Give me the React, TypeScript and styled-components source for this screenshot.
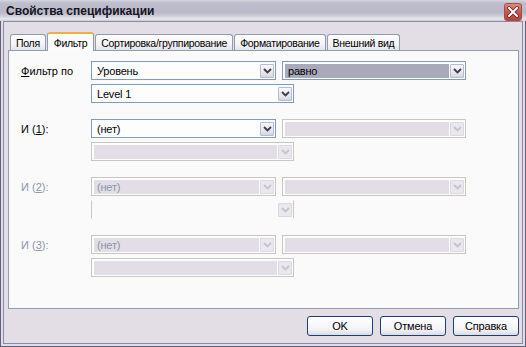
import React from "react";
import styled, { createGlobalStyle } from "styled-components";

const GlobalStyle = createGlobalStyle`
  html, body {
    margin: 0;
    padding: 0;
    background: #e3dee5;
  }
  * {
    box-sizing: border-box;
  }
`;

type ComboProps = {
  width: number;
  text?: string;
  selected?: boolean;
  disabled?: boolean;
  ghost?: boolean;
};

const Chevron = ({ disabled }: { disabled?: boolean }) => (
  <svg width="9" height="6" viewBox="0 0 9 6">
    <path
      d="M1 1 L4.5 4.5 L8 1"
      fill="none"
      stroke={disabled ? "#c6c3cb" : "#3c3c4a"}
      strokeWidth="1.8"
    />
  </svg>
);

const Combo = ({ width, text, selected, disabled, ghost }: ComboProps) => (
  <ComboBox $w={width} $disabled={disabled} $ghost={ghost}>
    <ComboText $selected={selected} $disabled={disabled} $ghost={ghost}>
      {text}
    </ComboText>
    <DropButton $disabled={disabled}>
      <Chevron disabled={disabled} />
    </DropButton>
  </ComboBox>
);

export default function App() {
  return (
    <>
      <GlobalStyle />
      <Window>
        <TitleBar>
          <Title>Свойства спецификации</Title>
          <CloseButton>
            <svg width="12" height="12" viewBox="0 0 12 12">
              <path
                d="M2 2 L10 10 M10 2 L2 10"
                stroke="#5a2020"
                strokeWidth="3.4"
                strokeLinecap="square"
              />
              <path
                d="M2 2 L10 10 M10 2 L2 10"
                stroke="#ffffff"
                strokeWidth="2"
                strokeLinecap="square"
              />
            </svg>
          </CloseButton>
        </TitleBar>
        <Frame>
          <Inner>
            <TabRow>
              <Tab>Поля</Tab>
              <Tab $active>Фильтр</Tab>
              <Tab>Сортировка/группирование</Tab>
              <Tab>Форматирование</Tab>
              <Tab>Внешний вид</Tab>
            </TabRow>
            <Panel>
              <Group>
                <Row>
                  <Label>
                    <u>Ф</u>ильтр по
                  </Label>
                  <Combo width={185} text="Уровень" />
                  <Combo width={184} text="равно" selected />
                </Row>
                <Row>
                  <Label />
                  <Combo width={203} text="Level 1" />
                </Row>
              </Group>
              <Group>
                <Row>
                  <Label>
                    И (<u>1</u>):
                  </Label>
                  <Combo width={185} text="(нет)" />
                  <Combo width={184} disabled />
                </Row>
                <Row>
                  <Label />
                  <Combo width={203} disabled />
                </Row>
              </Group>
              <Group>
                <Row>
                  <Label $disabled>
                    И (<u>2</u>):
                  </Label>
                  <Combo width={185} text="(нет)" disabled />
                  <Combo width={184} disabled />
                </Row>
                <Row>
                  <Label />
                  <Combo width={203} disabled ghost />
                </Row>
              </Group>
              <Group>
                <Row>
                  <Label $disabled>
                    И (<u>3</u>):
                  </Label>
                  <Combo width={185} text="(нет)" disabled />
                  <Combo width={184} disabled />
                </Row>
                <Row>
                  <Label />
                  <Combo width={203} disabled />
                </Row>
              </Group>
            </Panel>
            <ButtonRow>
              <Button>OK</Button>
              <Button>Отмена</Button>
              <Button>Справка</Button>
            </ButtonRow>
          </Inner>
        </Frame>
      </Window>
    </>
  );
}

const Window = styled.div`
  width: 526px;
  height: 347px;
  display: flex;
  flex-direction: column;
  background: #e3dee5;
  font-family: "Liberation Sans", Arial, sans-serif;
  font-size: 11px;
  color: #000;
`;

const TitleBar = styled.div`
  height: 21px;
  flex: none;
  display: flex;
  align-items: center;
  padding: 0 4px 0 6px;
  background: linear-gradient(
    #d6d6de 0,
    #bdbdcc 15%,
    #b9b9c9 60%,
    #d3d3dc 80%,
    #e9e9ef 90%,
    #c9c9d3 100%
  );
`;

const Title = styled.div`
  flex: 1;
  font-size: 12px;
  font-weight: bold;
  color: #14141e;
  padding-top: 1px;
`;

const CloseButton = styled.div`
  width: 18px;
  height: 18px;
  margin-top: 3px;
  border-radius: 3px;
  border: 1px solid #a84a48;
  background: linear-gradient(#e08a80, #cc5a50 45%, #b8443c);
  display: flex;
  align-items: center;
  justify-content: center;
`;

const Frame = styled.div`
  flex: 1;
  display: flex;
  border: 1px solid #5e5e7a;
  border-top: none;
  padding: 0 2px 2px;
`;

const Inner = styled.div`
  flex: 1;
  display: flex;
  flex-direction: column;
  border: 1px solid #8a8aa6;
  padding: 10px 3px 7px 4px;
`;

const TabRow = styled.div`
  height: 18px;
  flex: none;
  display: flex;
  align-items: flex-end;
  padding-left: 2px;
  position: relative;
  z-index: 1;
`;

const Tab = styled.div<{ $active?: boolean }>`
  height: ${(p) => (p.$active ? 19 : 16)}px;
  margin-bottom: ${(p) => (p.$active ? -1 : 0)}px;
  margin-right: 1px;
  padding: ${(p) => (p.$active ? "1px 6px 0" : "1px 5px 0")};
  display: flex;
  align-items: center;
  border: 1px solid #919baa;
  border-bottom: none;
  border-radius: 3px 3px 0 0;
  white-space: nowrap;
  font-size: 10.5px;
  letter-spacing: -0.3px;
  background: ${(p) =>
    p.$active
      ? "#fbfbfb"
      : "linear-gradient(#fefefe, #f4f3f6 60%, #e6e4ea)"};
  border-top: ${(p) => (p.$active ? "2px solid #f0b040" : "1px solid #919baa")};
`;

const Panel = styled.div`
  height: 259px;
  flex: none;
  border: 1px solid #8ba0b5;
  background: #fafafa;
  padding: 10px 0 0 12px;
  display: flex;
  flex-direction: column;
  gap: 16px;
`;

const Group = styled.div`
  display: flex;
  flex-direction: column;
  gap: 4px;
`;

const Row = styled.div`
  display: flex;
  align-items: center;
  gap: 6px;
`;

const Label = styled.div<{ $disabled?: boolean }>`
  width: 64px;
  flex: none;
  color: ${(p) => (p.$disabled ? "#8898aa" : "#000")};
`;

const ComboBox = styled.div<{ $w: number; $disabled?: boolean; $ghost?: boolean }>`
  width: ${(p) => p.$w}px;
  height: 19px;
  flex: none;
  display: flex;
  padding: 2px 1px 1px 2px;
  border: 1px solid ${(p) => (p.$disabled ? "#c8c6c0" : "#7f9db9")};
  border-top-color: ${(p) => (p.$ghost ? "transparent" : undefined)};
  border-bottom-color: ${(p) => (p.$ghost ? "transparent" : undefined)};
  background: ${(p) => (p.$ghost ? "transparent" : "#fdfdfd")};
`;

const ComboText = styled.div<{
  $selected?: boolean;
  $disabled?: boolean;
  $ghost?: boolean;
}>`
  flex: 1;
  display: flex;
  align-items: center;
  padding-left: 3px;
  white-space: nowrap;
  letter-spacing: -0.2px;
  color: ${(p) => (p.$disabled ? "#8a96aa" : "#000")};
  background: ${(p) =>
    p.$ghost
      ? "transparent"
      : p.$selected
      ? "#a9aab9"
      : p.$disabled
      ? "#e3dee5"
      : "transparent"};
`;

const DropButton = styled.div<{ $disabled?: boolean }>`
  width: 14px;
  margin-left: 1px;
  display: flex;
  align-items: center;
  justify-content: center;
  border: 1px solid ${(p) => (p.$disabled ? "#dcd8e2" : "#b6bccb")};
  border-radius: 1px;
  background: ${(p) =>
    p.$disabled
      ? "#ebe7ee"
      : "linear-gradient(#f8f7fb, #e6e4ec 70%, #d6d4de)"};
`;

const ButtonRow = styled.div`
  margin-top: 7px;
  display: flex;
  justify-content: flex-end;
  gap: 7px;
`;

const Button = styled.div`
  width: 66px;
  height: 20px;
  display: flex;
  align-items: center;
  justify-content: center;
  border: 1px solid #1c3f6e;
  border-radius: 3px;
  background: linear-gradient(#ffffff, #f3f2f6 70%, #dcdbe4);
  letter-spacing: -0.2px;
`;
